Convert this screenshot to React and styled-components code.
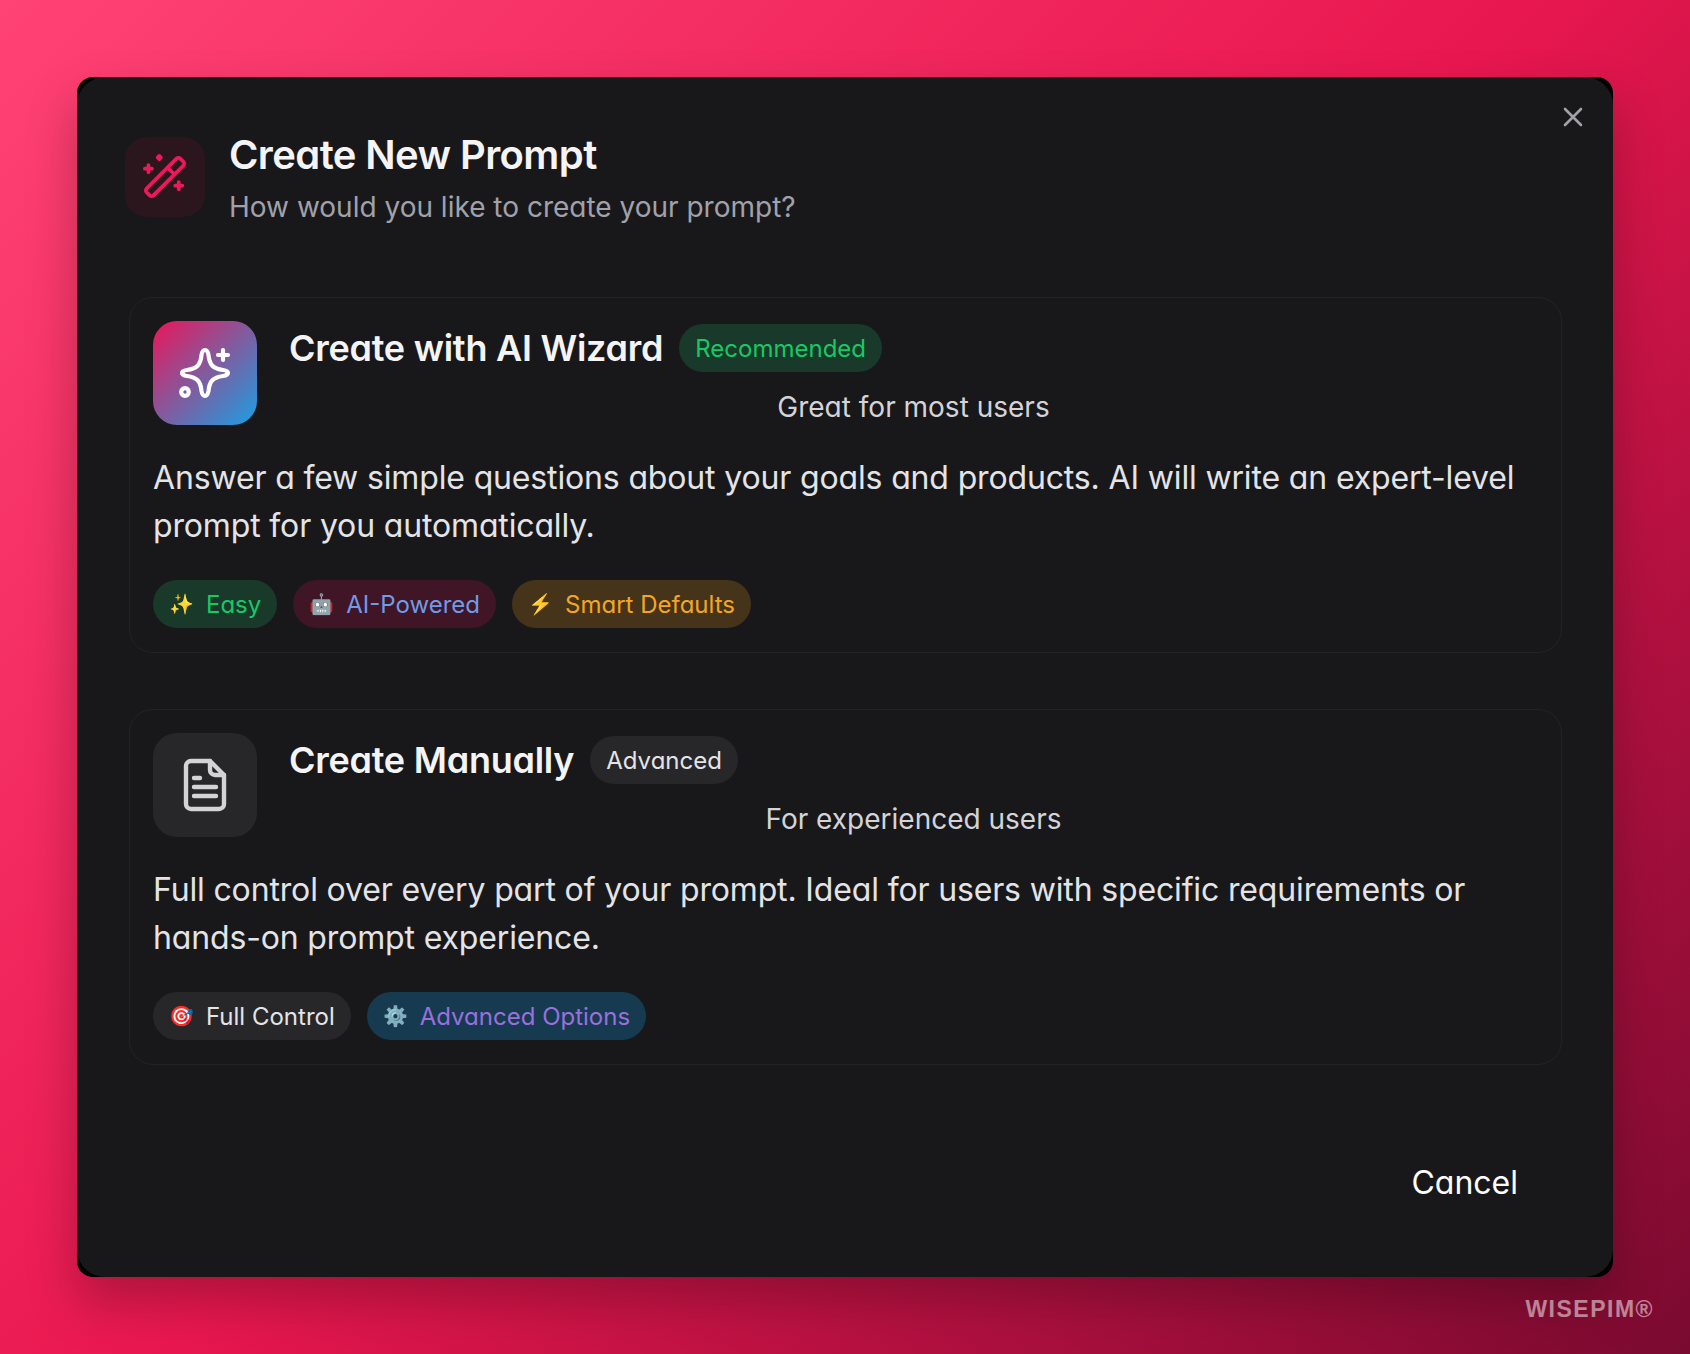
import styled, { createGlobalStyle } from 'styled-components';

const GlobalStyle = createGlobalStyle`
  html, body {
    margin: 0;
    padding: 0;
  }
  body {
    font-family: Inter, "Noto Sans", sans-serif;
    font-feature-settings: "cv11";
  }
`;

const Page = styled.div`
  position: relative;
  width: 1690px;
  height: 1354px;
  box-sizing: border-box;
  padding: 77px;
  overflow: hidden;
  background: linear-gradient(135deg, #ff4374 0%, #e9174f 50%, #7a0a30 100%);
`;

const Modal = styled.div`
  width: 1536px;
  height: 1200px;
  border-radius: 16px;
  background: #000;
  box-shadow: 0 25px 50px rgba(0, 0, 0, 0.25);
`;

const ModalInner = styled.div`
  position: relative;
  display: flex;
  flex-direction: column;
  height: 100%;
  border-radius: 28px;
  background: #18181b;
`;

const CloseButton = styled.button`
  position: absolute;
  top: 26px;
  right: 26px;
  width: 28px;
  height: 28px;
  padding: 0;
  display: flex;
  align-items: center;
  justify-content: center;
  background: none;
  border: 0;
  color: #a1a1aa;
`;

const Header = styled.header`
  display: flex;
  align-items: flex-start;
  gap: 24px;
  padding: 60px 48px 0;
`;

const HeaderIcon = styled.div`
  width: 80px;
  height: 80px;
  flex: none;
  border-radius: 22px;
  display: flex;
  align-items: center;
  justify-content: center;
  background: #2b161e;
  color: #ea1a5c;
`;

const HeaderText = styled.div`
  display: flex;
  flex-direction: column;
  gap: 16px;
`;

const Title = styled.h2`
  margin: 0;
  font-size: 40px;
  line-height: 36px;
  font-weight: 600;
  letter-spacing: -0.015em;
  color: #f4f4f5;
`;

const Subtitle = styled.p`
  margin: 0;
  font-size: 28px;
  line-height: 36px;
  color: #a1a1aa;
`;

const Options = styled.div`
  display: flex;
  flex-direction: column;
  gap: 56px;
  margin-top: 72px;
  padding: 0 51px 0 52px;
`;

const Card = styled.div`
  box-sizing: border-box;
  height: 356px;
  padding: 23px 23px;
  border: 1px solid #232326;
  border-radius: 24px;
`;

const CardHead = styled.div`
  display: flex;
  gap: 32px;
`;

const OptionIcon = styled.div`
  width: 104px;
  height: 104px;
  flex: none;
  border-radius: 24px;
  display: flex;
  align-items: center;
  justify-content: center;
  color: ${(p) => (p.$gradient ? '#fff' : '#d4d4d8')};
  background: ${(p) => (p.$gradient ? 'linear-gradient(135deg, #e9175a 0%, #1a9fe2 100%)' : '#27272a')};
`;

const CardTitleCol = styled.div`
  flex: 1;
  display: flex;
  flex-direction: column;
  gap: 17px;
  padding-top: 3px;
`;

const TitleRow = styled.div`
  display: flex;
  align-items: center;
  gap: 16px;
`;

const CardTitle = styled.h3`
  margin: 0;
  font-size: 36px;
  line-height: 48px;
  font-weight: 600;
  letter-spacing: -0.007em;
  color: #f4f4f5;
`;

const Chip = styled.span`
  display: inline-flex;
  align-items: center;
  gap: 13px;
  height: 48px;
  padding: 0 16px;
  border-radius: 24px;
  font-size: 24px;
  white-space: nowrap;
  color: ${(p) => p.$fg};
  background: ${(p) => p.$bg};
`;

const CardCaption = styled.p`
  margin: 0;
  text-align: center;
  font-size: 28px;
  line-height: 36px;
  color: #d4d4d8;
`;

const CardBody = styled.p`
  margin: 29px 0 0;
  font-size: 32px;
  line-height: 48px;
  letter-spacing: -0.15px;
  color: #e4e4e7;
`;

const TagRow = styled.div`
  display: flex;
  gap: 16px;
  margin-top: 30px;
`;

const Emoji = styled.span`
  width: 24px;
  text-align: center;
  font-size: 20px;
`;

const Footer = styled.footer`
  display: flex;
  justify-content: flex-end;
  padding: 94px 95px 0 0;
`;

const CancelButton = styled.button`
  background: none;
  border: 0;
  padding: 0;
  font-family: inherit;
  font-feature-settings: inherit;
  font-size: 32px;
  line-height: 48px;
  color: #fff;
`;

const Watermark = styled.div`
  position: absolute;
  right: 36px;
  bottom: 31px;
  font-family: "Liberation Sans", Arial, sans-serif;
  font-size: 23px;
  font-weight: 700;
  letter-spacing: 1.5px;
  color: rgba(255, 255, 255, 0.5);
`;

function WandIcon() {
  return (
    <svg width="52" height="52" viewBox="0 0 48 48" fill="none" stroke="currentColor" strokeWidth="3.400" strokeLinecap="round" strokeLinejoin="round">
      <rect x="2" y="19.500" width="44" height="9" rx="2.500" transform="rotate(-45 24 24)" />
      <path d="M26.500 15.500l6 6" />
      <path d="M8.700 13v6.600M5.400 16.300h6.600" />
      <path d="M36.700 28.700v6.600M33.400 32h6.600" />
      <path d="M18.700 4.500l1.500 1.500-1.500 1.500-1.500-1.500z" fill="currentColor" />
    </svg>
  );
}

function SparkleIcon() {
  return (
    <svg width="56" height="56" viewBox="0 0 56 56" fill="none" stroke="currentColor" strokeWidth="4.200" strokeLinecap="round" strokeLinejoin="round">
      <path d="M28 5C30 5 31 7 31.500 10C32.500 20 36 23.500 46 25C49.500 25.500 51 26.500 51 28C51 29.500 49.500 30.500 46 31C36 32.500 32.500 36 31.500 46C31 49 30 51 28 51C26 51 25 49 24.500 46C23.500 36 20 32.500 10 31C6.500 30.500 5 29.500 5 28C5 26.500 6.500 25.500 10 25C20 23.500 23.500 20 24.500 10C25 7 26 5 28 5Z" />
      <path d="M46 5v10M41 10h10" />
      <circle cx="8" cy="47" r="3.800" />
    </svg>
  );
}

function DocIcon() {
  return (
    <svg width="44" height="54" viewBox="0 0 44 54" fill="none" stroke="currentColor" strokeWidth="4.400" strokeLinecap="round" strokeLinejoin="round">
      <path d="M27 3H8a5 5 0 0 0-5 5v38a5 5 0 0 0 5 5h28a5 5 0 0 0 5-5V17z" />
      <path d="M27 3v9a5 5 0 0 0 5 5h9" />
      <path d="M11 20h6M11 29h22M11 38h22" />
    </svg>
  );
}

function CloseIcon() {
  return (
    <svg width="20" height="20" viewBox="0 0 20 20" fill="none" stroke="currentColor" strokeWidth="2.600" strokeLinecap="round">
      <path d="M2 2l16 16M18 2L2 18" />
    </svg>
  );
}

export default function App() {
  return (
    <Page>
      <GlobalStyle />
      <Modal>
        <ModalInner>
          <CloseButton><CloseIcon /></CloseButton>
          <Header>
            <HeaderIcon><WandIcon /></HeaderIcon>
            <HeaderText>
              <Title>Create New Prompt</Title>
              <Subtitle>How would you like to create your prompt?</Subtitle>
            </HeaderText>
          </Header>
          <Options>
            <Card>
              <CardHead>
                <OptionIcon $gradient><SparkleIcon /></OptionIcon>
                <CardTitleCol>
                  <TitleRow>
                    <CardTitle>Create with AI Wizard</CardTitle>
                    <Chip $fg="#17c964" $bg="#19392a">Recommended</Chip>
                  </TitleRow>
                  <CardCaption>Great for most users</CardCaption>
                </CardTitleCol>
              </CardHead>
              <CardBody>
                Answer a few simple questions about your goals and products. AI will write an expert-level prompt for you automatically.
              </CardBody>
              <TagRow>
                <Chip $fg="#17c964" $bg="#19392a"><Emoji>✨</Emoji>Easy</Chip>
                <Chip $fg="#6f9be8" $bg="#401525"><Emoji>🤖</Emoji>AI-Powered</Chip>
                <Chip $fg="#f5a524" $bg="#46341a"><Emoji>⚡</Emoji>Smart Defaults</Chip>
              </TagRow>
            </Card>
            <Card>
              <CardHead>
                <OptionIcon><DocIcon /></OptionIcon>
                <CardTitleCol>
                  <TitleRow>
                    <CardTitle>Create Manually</CardTitle>
                    <Chip $fg="#e4e4e7" $bg="#27272a">Advanced</Chip>
                  </TitleRow>
                  <CardCaption>For experienced users</CardCaption>
                </CardTitleCol>
              </CardHead>
              <CardBody>
                Full control over every part of your prompt. Ideal for users with specific requirements or hands-on prompt experience.
              </CardBody>
              <TagRow>
                <Chip $fg="#e4e4e7" $bg="#27272a"><Emoji>🎯</Emoji>Full Control</Chip>
                <Chip $fg="#9a70dd" $bg="#163a50"><Emoji>⚙️</Emoji>Advanced Options</Chip>
              </TagRow>
            </Card>
          </Options>
          <Footer>
            <CancelButton>Cancel</CancelButton>
          </Footer>
        </ModalInner>
      </Modal>
      <Watermark>WISEPIM®</Watermark>
    </Page>
  );
}
